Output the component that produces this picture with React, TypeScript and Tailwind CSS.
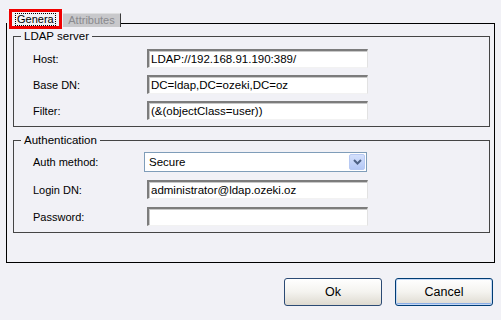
import React from "react";

function Field({ value, w = 221 }: { value?: string; w?: number }) {
  return (
    <div
      className="h-[19px] bg-white border-t-2 border-l-2 border-t-[#7c7c7c] border-l-[#7c7c7c] border-r border-b border-r-[#e2e2e2] border-b-[#f2f2f2] shadow-[inset_1px_1px_0_#c8c8c8] text-[11.5px] leading-[16px] pl-[2px] text-black whitespace-nowrap overflow-hidden"
      style={{ width: w }}
    >
      {value}
    </div>
  );
}

function Row({ label, children }: { label: string; children: React.ReactNode }) {
  return (
    <div className="flex items-center">
      <div className="w-[114px] text-[11px] text-black leading-[14px]">{label}</div>
      {children}
    </div>
  );
}

function Group({
  legend,
  children,
  className = "",
}: {
  legend: string;
  children: React.ReactNode;
  className?: string;
}) {
  return (
    <fieldset className={`border border-[#454545] w-[477px] ${className}`}>
      <legend className="ml-[7px] px-[3px] text-[11.5px] leading-[14px] text-black">{legend}</legend>
      {children}
    </fieldset>
  );
}

export default function App() {
  return (
    <div className="relative w-[501px] h-[320px] overflow-hidden bg-[#f1f1f6] font-['Liberation_Sans',Arial,sans-serif]">
      {/* Tabs */}
      <div className="relative z-10 flex items-end pl-[7px] pt-[10px] -mb-[4px]">
        <div className="w-[56px] h-[17px] bg-[#f1f1f6] border-t border-[#ffffff] flex items-start pl-[8px] pt-[2px]">
          <span className="border border-dotted border-black text-[11px] leading-[11px] h-[13px] px-[1px] text-black whitespace-nowrap">
            Genera
          </span>
        </div>
        <div className="w-[58px] h-[14px] bg-[#c8c8cb] border-t border-t-[#dedee0] border-r border-r-[#3c3c3c] flex items-start justify-center text-[11px] leading-[12px] text-[#8a8a8e]">
          Attributes
        </div>
      </div>

      {/* Panel */}
      <div className="ml-[6px] w-[489px] h-[240px] border border-black pt-[5px] pl-[6px] pr-[4px]">
        <Group legend="LDAP server">
          <div className="flex flex-col gap-[7px] pt-[6px] pb-[6px] pl-[19px]">
            <Row label="Host:">
              <Field value="LDAP://192.168.91.190:389/" />
            </Row>
            <Row label="Base DN:">
              <Field value="DC=ldap,DC=ozeki,DC=oz" />
            </Row>
            <Row label="Filter:">
              <Field value="(&(objectClass=user))" />
            </Row>
          </div>
        </Group>

        <Group legend="Authentication" className="mt-[6px]">
          <div className="flex flex-col gap-[8px] pt-[5px] pb-[6px] pl-[19px]">
            <Row label="Auth method:">
              <div className="-ml-[3px] w-[223px] h-[20px] bg-white border border-[#7f9db9] flex items-center justify-between">
                <span className="pl-[4px] text-[11.5px] text-black leading-[14px]">Secure</span>
                <div className="mr-[1px] w-[16px] h-[16px] rounded-[2px] border border-[#b7c9f3] bg-linear-to-b from-[#d4e0fc] to-[#b4c8f6] flex items-center justify-center">
                  <svg width="9" height="6" viewBox="0 0 9 6">
                    <path d="M1 1 L4.5 4.5 L8 1" fill="none" stroke="#4d6185" strokeWidth="2" />
                  </svg>
                </div>
              </div>
            </Row>
            <Row label="Login DN:">
              <Field value="administrator@ldap.ozeki.oz" />
            </Row>
            <Row label="Password:">
              <Field value="" />
            </Row>
          </div>
        </Group>
      </div>

      {/* Buttons */}
      <div className="flex justify-end gap-[13px] pr-[8px] mt-[15px]">
        <button className="w-[98px] h-[28px] rounded-[3px] border border-[#2b4a74] bg-linear-to-b from-white via-[#f4f3ef] to-[#dedad0] text-[12.5px] text-black">
          Ok
        </button>
        <button className="w-[98px] h-[28px] rounded-[3px] border border-[#003c74] bg-linear-to-b from-white via-[#f4f3ef] to-[#dedad0] shadow-[inset_0_0_0_1px_#c4d8f6,inset_0_-2px_0_#8aaee6] text-[12.5px] text-black">
          Cancel
        </button>
      </div>

      {/* Red highlight overlay */}
      <div className="absolute left-[9px] top-[9px] w-[53px] h-[20px] border-[3px] border-[#f00000] z-20 pointer-events-none" />
    </div>
  );
}
